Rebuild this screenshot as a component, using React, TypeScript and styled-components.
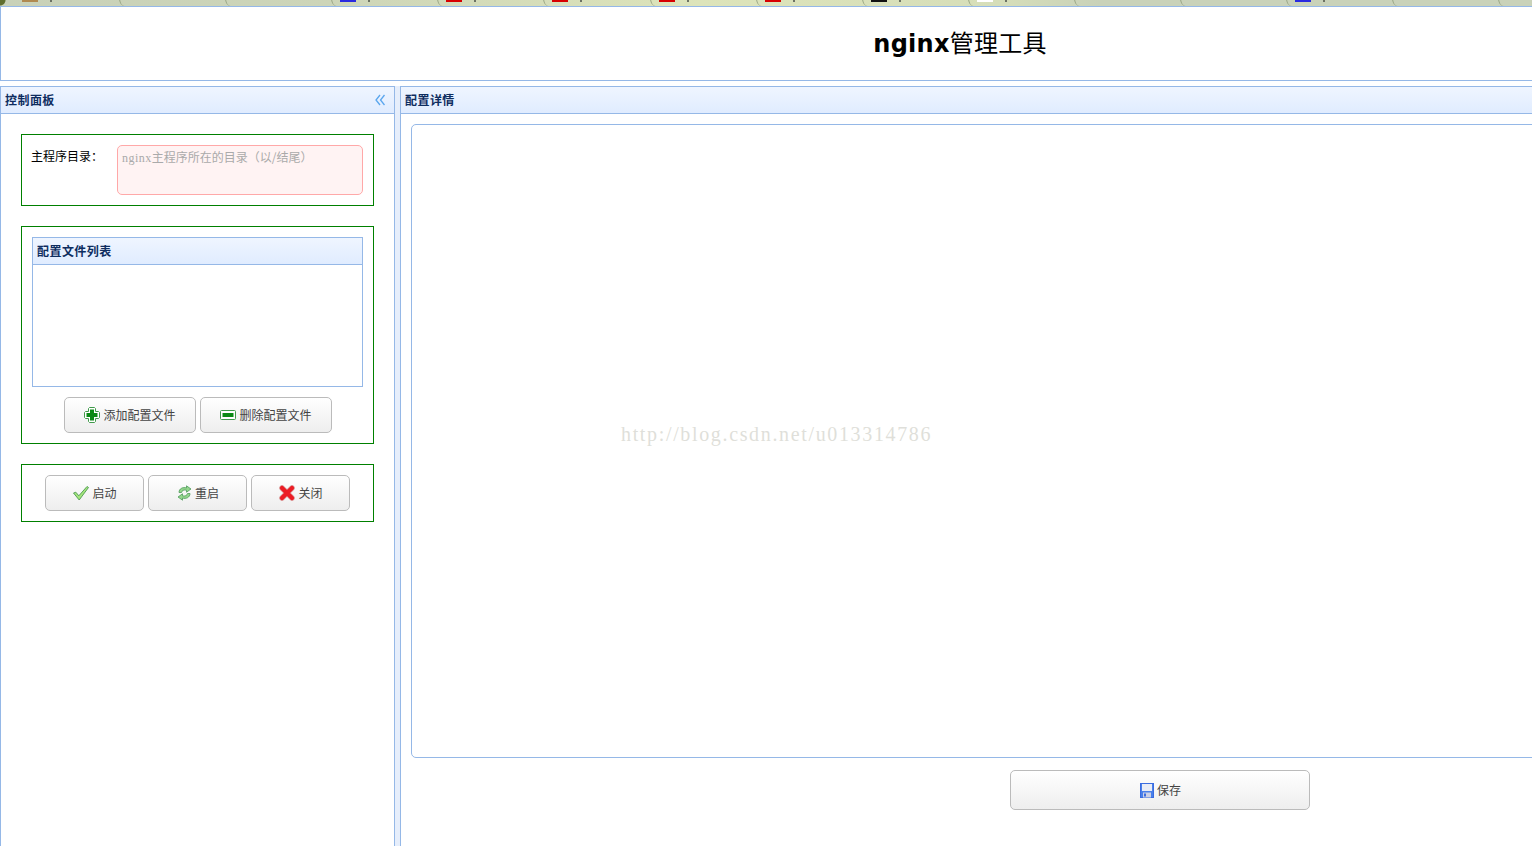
import React from "react";
import styled, { createGlobalStyle } from "styled-components";

const GlobalStyle = createGlobalStyle`
    html, body {
        margin: 0;
        padding: 0;
        height: 100%;
        overflow: hidden;
        background: #fff;
    }
`;
const CJK = `"Noto Sans CJK SC", "Liberation Sans", sans-serif`;
const BLUE = "#95b8e7";

// the page was 1920 wide, the shot cuts it off on the right
const Page = styled.div`
    width: 1920px;
    height: 846px;
    display: flex;
    flex-direction: column;
    font-family: ${CJK};
    font-size: 12px;
    position: relative;
    overflow: hidden;
`;
const TabStrip = styled.div`
    height: 6px;
    display: flex;
    overflow: hidden;
    padding-left: 15px;
    background:
        radial-gradient(circle at 0 0, #5f6e2e 5px, transparent 6px),
        linear-gradient(90deg, #c8d1b8 0, #cdd5b8 330px, #dde4ba 700px, #d6deb9 1000px, #c9d2b9 1100px, #c9d2b9 1920px);
`;
const Tab = styled.div`
    flex: 0 0 106.1px;
    height: 6px;
    position: relative;
    box-sizing: border-box;
    display: flex;
    align-items: flex-start;
    gap: 12px;
    padding-left: 7px;
    &::after {
        content: "";
        position: absolute;
        right: -9px;
        top: -10px;
        width: 10px;
        height: 16px;
        border-left: 1px solid #95a282;
        border-radius: 50% 0 0 50%;
    }
`;
const Favicon = styled.span<{ $color: string }>`
    display: block;
    width: 16px;
    height: 2px;
    background: ${(p) => p.$color};
`;
const TitleTail = styled.span`
    display: block;
    width: 2px;
    height: 2px;
    background: #6c7264;
`;
const TopBar = styled.header`
    height: 75px;
    box-sizing: border-box;
    border: 1px solid ${BLUE};
    display: flex;
    align-items: center;
    justify-content: center;
    padding-bottom: 4px;
    background: #fff;
`;
const Title = styled.h1`
    margin: 0;
    font-family: "DejaVu Sans", sans-serif;
    font-size: 24px;
    font-weight: bold;
    letter-spacing: 0.25px;
    color: #000;
    span {
        font-family: ${CJK};
        font-weight: normal;
    }
`;
const Columns = styled.div`
    flex: 1;
    display: flex;
    gap: 5px;
    padding-top: 5px;
    background: linear-gradient(#fff 0, #fff 5px, #e6eefb 5px);
    min-height: 0;
`;
const Panel = styled.section<{ $width?: string }>`
    display: flex;
    flex-direction: column;
    box-sizing: border-box;
    border: 1px solid ${BLUE};
    border-bottom: 0;
    background: #fff;
    ${(p) => (p.$width ? `width: ${p.$width};` : "flex: 1; min-width: 0;")}
`;
const PanelHead = styled.div`
    height: 27px;
    flex: none;
    box-sizing: border-box;
    border-bottom: 1px solid ${BLUE};
    background: linear-gradient(#eff5ff, #e0ecff);
    display: flex;
    align-items: center;
    justify-content: space-between;
    padding: 0 9px 2px 4px;
    color: #0e2d5f;
    font-size: 12px;
    font-weight: bold;
    letter-spacing: 0.45px;
    svg {
        margin-top: 2px;
    }
`;
const Sidebar = styled.div`
    padding: 20px 20px 0;
    display: flex;
    flex-direction: column;
    gap: 20px;
`;
const GreenBox = styled.div`
    border: 1px solid green;
    padding: 10px;
`;
const DirRow = styled.div`
    display: flex;
    height: 50px;
`;
const DirLabel = styled.label`
    width: 85px;
    flex: none;
    color: #000;
    line-height: 22px;
    margin-left: -1px;
    margin-right: 1px;
`;
const DirInput = styled.div`
    flex: 1;
    box-sizing: border-box;
    border: 1px solid #ffa8a8;
    border-radius: 5px;
    background: #fff3f3;
    color: #aaa;
    padding: 3px 4px;
    line-height: 16px;
`;
const Latin = styled.span`
    font-family: "Liberation Serif", serif;
    font-size: 12px;
    letter-spacing: 0.5px;
`;
const ListPanel = styled.div`
    border: 1px solid ${BLUE};
    height: 150px;
    box-sizing: border-box;
`;
const ButtonRow = styled.div`
    display: flex;
    justify-content: center;
    gap: 4px;
`;
const SpacedRow = styled(ButtonRow)`
    margin-top: 10px;
`;
const Btn = styled.button<{ $w: number; $h: number }>`
    width: ${(p) => p.$w}px;
    height: ${(p) => p.$h}px;
    box-sizing: border-box;
    border: 1px solid #bbb;
    border-radius: 5px;
    background: linear-gradient(#fff, #eee);
    color: #444;
    font-family: ${CJK};
    font-size: 12px;
    display: flex;
    align-items: center;
    justify-content: center;
    gap: 3px;
    padding: 0 0 0 1px;
    svg {
        flex: none;
    }
    span {
        position: relative;
        top: -1px;
    }
`;
const DetailBody = styled.div`
    flex: 1;
    padding: 10px;
    display: flex;
    flex-direction: column;
    align-items: center;
    gap: 12px;
`;
const Editor = styled.div`
    align-self: stretch;
    height: 634px;
    box-sizing: border-box;
    border: 1px solid ${BLUE};
    border-radius: 5px;
    background: #fff;
`;
const Watermark = styled.div`
    position: absolute;
    left: 621px;
    top: 424px;
    font-family: "Liberation Serif", serif;
    font-size: 20px;
    letter-spacing: 1.65px;
    line-height: 20px;
    color: #dfdfda;
    white-space: nowrap;
`;

const CollapseIcon = () => (
    <svg width="10" height="12" viewBox="0 0 10 12" fill="none" stroke="#5aa6ee" strokeWidth="1.3">
        <path d="M5 1 L1 6 L5 11" />
        <path d="M9.5 1 L5.5 6 L9.5 11" />
    </svg>
);
const AddIcon = () => (
    <svg width="16" height="16" viewBox="0 0 16 16">
        <path d="M5.5 .5h5l1 1v3h3l1 1v5l-1 1h-3v3l-1 1h-5l-1-1v-3h-3l-1-1v-5l1-1h3v-3z" fill="#fff" stroke="#3f9a4a" />
        <path d="M6 2.500h4v3.500h3.500v4H10v3.500H6V10H2.500V6H6z" fill="#0a8a14" />
    </svg>
);
const RemoveIcon = () => (
    <svg width="16" height="16" viewBox="0 0 16 16">
        <rect x=".5" y="3.500" width="15" height="9" rx="1" fill="#fff" stroke="#3f9a4a" />
        <rect x="2.500" y="6" width="11" height="4" fill="#0a8a14" />
    </svg>
);
const OkIcon = () => (
    <svg width="16" height="16" viewBox="0 0 16 16">
        <path d="M.5 8l2.300-.8 3 3.600L14 1.500l1.500 1L6.200 15z" fill="#a5e57c" stroke="#4d9a52" strokeWidth=".9" strokeLinejoin="round" />
    </svg>
);
const ReloadIcon = () => (
    <svg width="15" height="16" viewBox="0 0 15 16">
        <path d="M2 7.500C2 3.500 6 1.800 9.500 3V.8L14 4 9.500 7.200V5.200C7 4.500 4.800 5.500 4.500 7.500z" fill="#93d68c" stroke="#4f9a5c" strokeWidth=".8" />
        <path d="M13 8.500C13 12.500 9 14.200 5.500 13v2.200L1 12l4.500-3.200v2c2.500.7 4.700-.3 5-2.300z" fill="#93d68c" stroke="#4f9a5c" strokeWidth=".8" />
    </svg>
);
const CloseIcon = () => (
    <svg width="16" height="16" viewBox="0 0 16 16" fill="none" strokeLinecap="round">
        <path d="M3 3L13 13M13 3L3 13" stroke="#d99a9a" strokeWidth="5.5" />
        <path d="M3 3L13 13M13 3L3 13" stroke="#ec1c24" strokeWidth="4.2" />
    </svg>
);
const SaveIcon = () => (
    <svg width="14" height="15" viewBox="0 0 14 15">
        <rect x=".5" y=".5" width="13" height="14" fill="#4a80ea" stroke="#3a6ce0" />
        <rect x="2" y="1" width="10" height="7" fill="#e8ecf6" />
        <rect x="3" y="9.500" width="8" height="5" fill="#ccd1e6" />
        <rect x="4" y="10.500" width="2" height="3" fill="#3a6ce0" />
    </svg>
);

const favicons: (string | null)[] = [
    "#b08a50", null, null, "#2a2ae0", "#d80000", "#d80000", "#d80000", "#d80000",
    "#111111", "#ffffff", null, null, "#2a2ae0", null, null, null, null, null,
];

export default function App() {
    return (
        <Page>
            <GlobalStyle />
            <TabStrip>
                {favicons.map((color, i) => (
                    <Tab key={i}>
                        {color && <Favicon $color={color} />}
                        {color && <TitleTail />}
                    </Tab>
                ))}
            </TabStrip>
            <TopBar>
                <Title>nginx<span>管理工具</span></Title>
            </TopBar>
            <Columns>
                <Panel $width="395px">
                    <PanelHead>
                        控制面板
                        <CollapseIcon />
                    </PanelHead>
                    <Sidebar>
                        <GreenBox>
                            <DirRow>
                                <DirLabel>主程序目录：</DirLabel>
                                <DirInput><Latin>nginx</Latin>主程序所在的目录（以/结尾）</DirInput>
                            </DirRow>
                        </GreenBox>
                        <GreenBox>
                            <ListPanel>
                                <PanelHead>配置文件列表</PanelHead>
                            </ListPanel>
                            <SpacedRow>
                                <Btn $w={132} $h={36}><AddIcon /><span>添加配置文件</span></Btn>
                                <Btn $w={132} $h={36}><RemoveIcon /><span>删除配置文件</span></Btn>
                            </SpacedRow>
                        </GreenBox>
                        <GreenBox>
                            <ButtonRow>
                                <Btn $w={99} $h={36}><OkIcon /><span>启动</span></Btn>
                                <Btn $w={99} $h={36}><ReloadIcon /><span>重启</span></Btn>
                                <Btn $w={99} $h={36}><CloseIcon /><span>关闭</span></Btn>
                            </ButtonRow>
                        </GreenBox>
                    </Sidebar>
                </Panel>
                <Panel>
                    <PanelHead>配置详情</PanelHead>
                    <DetailBody>
                        <Editor />
                        <Btn $w={300} $h={40}><SaveIcon /><span>保存</span></Btn>
                    </DetailBody>
                </Panel>
            </Columns>
            <Watermark>http://blog.csdn.net/u013314786</Watermark>
        </Page>
    );
}
